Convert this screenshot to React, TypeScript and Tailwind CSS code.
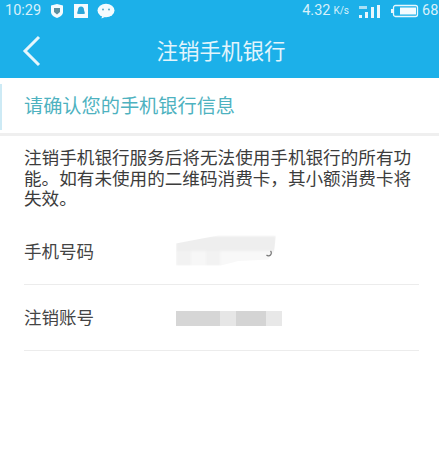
const font = {fontFamily: '"Roboto", "Noto Sans CJK SC", sans-serif'};

function StatusBar() {
  return (
    <div className="flex h-[22px] items-center justify-between pl-[5px] text-[14.500px] leading-none text-[#d8f1fb]">
      <div className="flex items-center">
        <span className="w-[40px] pt-[1px]">10:29</span>
        <svg width="16" height="16" viewBox="0 0 16 16" className="ml-[4px]">
          <path d="M2 2.500 8 1l6 1.500V9c0 3-3 5-6 6-3-1-6-3-6-6Z" fill="#f4fbfe" />
          <path d="M5 5h6v4l-3 2.500L5 9Z" fill="#5d8f9e" />
        </svg>
        <svg width="16" height="16" viewBox="0 0 16 16" className="ml-[8px]">
          <rect x="1" y="1" width="14" height="14" fill="#f4fbfe" />
          <path d="M8 3.500c2 0 3 1.500 3 3.500l1 3.500-1.500.500H5.500L4 10.500 5 7c0-2 1-3.500 3-3.500Z" fill="#2ba6d8" />
        </svg>
        <svg width="18" height="16" viewBox="0 0 18 16" className="ml-[8px]">
          <ellipse cx="9" cy="7.500" rx="8.500" ry="6.800" fill="#f4fbfe" />
          <path d="M5 13l-.5 2.500L8 14Z" fill="#f4fbfe" />
          <circle cx="6" cy="6.500" r="1" fill="#5aa9c6" />
          <circle cx="12" cy="6.500" r="1" fill="#5aa9c6" />
        </svg>
      </div>
      <div className="flex items-center">
        <span className="pt-[1px]">4.32</span>
        <span className="ml-[3px] text-[10px]">K/s</span>
        <svg width="24" height="16" viewBox="0 0 24 16" className="ml-[9px]">
          <rect x="1" y="12" width="3" height="3" fill="#e8f7fd" />
          <rect x="7" y="9" width="3" height="6" fill="#e8f7fd" />
          <rect x="13" y="4" width="3" height="11" fill="#e8f7fd" />
          <rect x="19" y="2" width="3" height="13" fill="#e8f7fd" />
          <rect x="1" y="3" width="8" height="3" fill="#a9e0f5" />
        </svg>
        <svg width="28" height="14" viewBox="0 0 28 14" className="ml-[9px]">
          <rect x="0" y="5" width="2" height="4" fill="#e8f7fd" />
          <rect x="2.500" y="1.500" width="24" height="11" rx="2" fill="none" stroke="#e8f7fd" strokeWidth="1.300" />
          <rect x="9" y="3.500" width="16" height="7" fill="#f4fbfe" />
        </svg>
        <span className="ml-[3px] w-[17px] overflow-hidden pt-[1px]">68</span>
      </div>
    </div>
  );
}

function Row({label, children}: {label: string; children: React.ReactNode}) {
  return (
    <div className="flex h-[66px] items-center border-b border-[#ececec] pt-[2px]">
      <span className="w-[152px] text-[17.500px] text-[#444]">{label}</span>
      {children}
    </div>
  );
}

export default function App() {
  return (
    <div className="h-[466px] w-[439px] overflow-hidden bg-white" style={font}>
      <div className="h-[78px] bg-[#1cb0e9]">
        <StatusBar />
        <div className="relative flex h-[56px] items-center justify-center pl-[3px] pt-[4px]">
          <svg
            width="20"
            height="32"
            viewBox="0 0 20 32"
            className="absolute left-[22px] top-[13px]"
          >
            <polyline
              points="17,2 3,16 17,30"
              fill="none"
              stroke="#e6f6fc"
              strokeWidth="3"
            />
          </svg>
          <span className="text-[21.500px] text-[#e3f5fc]">注销手机银行</span>
        </div>
      </div>

      <div className="relative flex h-[58px] items-center border-b-[3px] border-[#efefef] pl-[24px] pt-[3px]">
        <div className="absolute left-0 top-[6px] h-[46px] w-[2px] bg-[#cdeaf5]" />
        <span className="text-[19.200px] text-[#4eb2c0]">请确认您的手机银行信息</span>
      </div>

      <div className="px-[24px] pt-[12px]">
        <p className="w-[395px] text-[17.600px] leading-[20.500px] text-[#3c3c3c]">
          注销手机银行服务后将无法使用手机银行的所有功能。如有未使用的二维码消费卡，其小额消费卡将失效。
        </p>
        <div className="mt-[9.500px] w-[395px]">
          <Row label="手机号码">
            <div className="relative mt-[-4px] h-[30px] w-[100px]">
              <div className="flex h-full flex-col blur-[1px] [clip-path:polygon(0_27%,42%_0,100%_0,98%_55%,92%_80%,62%_85%,45%_100%,0_100%)]">
                <div className="h-[15px] bg-[#eeeeee]" />
                <div className="flex h-[15px]">
                  <div className="w-[15px] bg-[#f2f2f2]" />
                  <div className="w-[15px] bg-[#f7f7f7]" />
                  <div className="w-[14px] bg-[#f2f2f2]" />
                  <div className="w-[56px] bg-[#f8f8f8]" />
                </div>
              </div>
              <svg width="8" height="8" viewBox="0 0 8 8" className="absolute left-[89px] top-[14px]">
                <path d="M5.500 1A2.800 2.800 0 1 1 1.500 5" fill="none" stroke="#777" strokeWidth="1.200" />
              </svg>
            </div>
          </Row>
          <Row label="注销账号">
            <div className="flex h-[15px] w-[106px] blur-[0.500px]">
              <div className="w-[44px] bg-[#d6d6d6]" />
              <div className="w-[16px] bg-[#e6e6e6]" />
              <div className="w-[30px] bg-[#d4d4d4]" />
              <div className="w-[16px] bg-[#e8e8e8]" />
            </div>
          </Row>
        </div>
      </div>
    </div>
  );
}
